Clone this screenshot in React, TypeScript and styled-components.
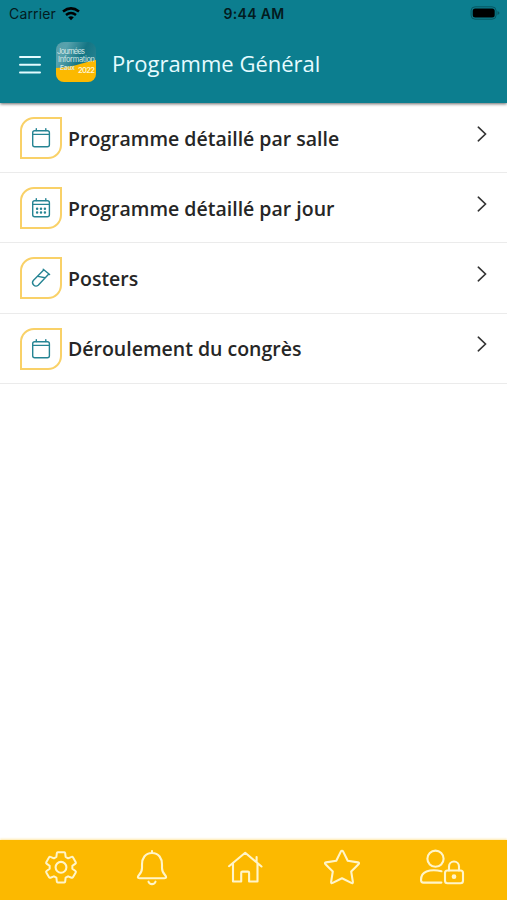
import React from 'react';
import styled, { createGlobalStyle } from 'styled-components';

const GlobalStyle = createGlobalStyle`
  * { box-sizing: border-box; }
  body { margin: 0; background: #fff; font-family: 'Open Sans', sans-serif; }
`;

const Screen = styled.div`
  display: flex;
  flex-direction: column;
  height: 900px;
  width: 100%;
  overflow: hidden;
  background: #fff;
`;

const Header = styled.header`
  flex: none;
  height: 103px;
  background: #0c7e8f;
  box-shadow: 0 1px 3px rgba(0, 0, 0, 0.6);
`;

const StatusBar = styled.div`
  display: grid;
  grid-template-columns: 1fr auto 1fr;
  align-items: center;
  height: 27px;
  padding: 0 7px 0 9px;
  color: #031b20;
  font-family: Inter, sans-serif;
  font-size: 14px;
  line-height: 27px;
`;

const Carrier = styled.div`
  display: flex;
  align-items: center;
  gap: 6px;
  letter-spacing: 0.15px;
`;

const Clock = styled.div`
  margin-left: -1px;
  font-weight: 600;
  letter-spacing: 0.35px;
`;

const Battery = styled.svg`
  justify-self: end;
  margin-bottom: 1px;
`;

const TitleBar = styled.div`
  display: flex;
  align-items: center;
  height: 74px;
  padding-left: 19px;
`;

const MenuIcon = styled.svg`
  margin-top: 2px;
`;

const Logo = styled.svg`
  margin: 0 16px 4px 15px;
`;

const Title = styled.h1`
  margin: 0 0 3px;
  color: #e6fbff;
  font-size: 22px;
  font-weight: 400;
  line-height: 30px;
  white-space: nowrap;
`;

const List = styled.ul`
  flex: 1;
  margin: 0;
  padding: 0;
  list-style: none;
`;

const Row = styled.li`
  display: flex;
  align-items: center;
  height: 70.2px;
  padding: 1px 19px 0 20px;
  border-bottom: 1px solid #ebebeb;
`;

const Leaf = styled.div`
  display: flex;
  width: 42px;
  height: 42px;
  border: 2px solid #f9d168;
  border-radius: 14px 0 14px 0;
  align-items: center;
  justify-content: center;
`;

const Label = styled.span`
  flex: 1;
  margin: 1px 0 0 6px;
  color: #262626;
  font-size: 19.5px;
  font-weight: 600;
  line-height: 28px;
  white-space: nowrap;
`;

const Chevron = styled.svg`
  margin-bottom: 9px;
`;

const Footer = styled.footer`
  flex: none;
  display: flex;
  align-items: flex-start;
  justify-content: space-between;
  height: 60px;
  padding: 8px 42px 0 43px;
  background: #fcb900;
  box-shadow: 0 -1px 2px rgba(252, 185, 0, 0.35);
`;

type IconKind = 'calendar' | 'days' | 'tube';

const RowIcon = ({ kind }: { kind: IconKind }) => (
  <svg width="24" height="24" viewBox="0 0 24 24" fill="none" stroke="#258493" strokeWidth="1.4" strokeLinecap="round" strokeLinejoin="round">
    {kind === 'tube' ? (
      <path d="M14.2 3.2 20.6 8.5M14.9 3.8 4.3 14.4a3.5 3.5 0 0 0 4.9 4.9L19.8 8M9 10.4l7 1.4" />
    ) : (
      <>
        <rect x="3.7" y="4.7" width="16.7" height="16" rx="2" />
        <path d="M3.7 8.4h16.7M7.3 4.5V2.6M16.8 4.5V2.6" />
        {kind === 'days' && (
          <path strokeWidth="2.5" d="M8.1 12.8h.01M12 12.8h.01M15.9 12.8h.01M8.1 16.5h.01M12 16.5h.01M15.9 16.5h.01" />
        )}
      </>
    )}
  </svg>
);

const items: { icon: IconKind; label: string }[] = [
  { icon: 'calendar', label: 'Programme détaillé par salle' },
  { icon: 'days', label: 'Programme détaillé par jour' },
  { icon: 'tube', label: 'Posters' },
  { icon: 'calendar', label: 'Déroulement du congrès' },
];

const NavIcon = styled.svg.attrs({ fill: 'none', stroke: '#fff5c9', strokeWidth: 2.1, strokeLinecap: 'round', strokeLinejoin: 'round' })<{ $shift?: number }>`
  flex: none;
  margin-left: ${({ $shift = 0 }) => $shift}px;
  margin-right: ${({ $shift = 0 }) => -$shift}px;
`;

export default function App() {
  return (
    <Screen>
      <GlobalStyle />
      <Header>
        <StatusBar>
          <Carrier>
            Carrier
            <svg width="18" height="14" viewBox="0 0 18 14" fill="none" stroke="#000" strokeWidth="2.5">
              <path d="M1 4.500Q9-1.800 17 4.500M4 8Q9 4 14 8" />
              <path d="M6.200 10.300Q9 8.100 11.800 10.300L9 13.200Z" fill="#000" stroke="none" />
            </svg>
          </Carrier>
          <Clock>9:44 AM</Clock>
          <Battery width="30" height="14" viewBox="0 0 30 14">
            <rect x="1.100" y="0.800" width="25" height="12.400" rx="4" fill="none" stroke="#075762" />
            <rect x="2.700" y="2.400" width="22" height="9.200" rx="2.500" fill="#000" />
            <path d="M27.500 5v4q2-1 2-2t-2-2" fill="#075762" />
          </Battery>
        </StatusBar>
        <TitleBar>
          <MenuIcon width="22" height="20" viewBox="0 0 22 20" stroke="#e2fbff" strokeWidth="2" strokeLinecap="round">
            <path d="M1 2h20M1 9.800h20M1 17.600h20" />
          </MenuIcon>
          <Logo width="40" height="40" viewBox="0 0 40 40">
            <defs>
              <linearGradient id="sky" x1="0" y1="0" x2="1" y2="0.5">
                <stop offset="0" stopColor="#579da9" />
                <stop offset="0.25" stopColor="#58a2ad" />
                <stop offset="0.65" stopColor="#147584" />
                <stop offset="1" stopColor="#278290" />
              </linearGradient>
              <clipPath id="tile"><rect width="40" height="40" rx="8" /></clipPath>
            </defs>
            <g clipPath="url(#tile)">
              <rect width="40" height="40" fill="url(#sky)" />
              <path d="M0 26Q14 25 24 22T40 18V40H0Z" fill="#fcb900" />
              <g fill="#d3e8e6" fontFamily="Inter, sans-serif" fontSize="7.500">
                <text x="1" y="12" textLength="28">Journées</text>
                <text x="2" y="20" textLength="37">Information</text>
                <text x="4" y="28" fontSize="6.500" fontWeight="600" textLength="15">Eaux</text>
                <text x="22" y="31" fill="#fff4d0" fontWeight="600" textLength="17">2022</text>
              </g>
            </g>
          </Logo>
          <Title>Programme Général</Title>
        </TitleBar>
      </Header>
      <List>
        {items.map(({ icon, label }) => (
          <Row key={label}>
            <Leaf><RowIcon kind={icon} /></Leaf>
            <Label>{label}</Label>
            <Chevron width="12" height="18" viewBox="0 0 12 18" fill="none" stroke="#333" strokeWidth="1.600" strokeLinecap="round">
              <path d="M2.300 2.200l7.200 6.800-7.200 6.800" />
            </Chevron>
          </Row>
        ))}
      </List>
      <Footer>
        <NavIcon width="36" height="38" viewBox="0 0 36 38">
          <path d="M14.500 3.500h7q.8 0 .9.900l.5 4.100 2.600 1.500 3.700-1.500q.9-.4 1.400.4l3 5.200q.5.900-.3 1.500L30 18v3l3.300 2.400q.8.600.3 1.500l-3 5.200q-.5.800-1.400.4l-3.700-1.500-2.600 1.500-.5 4.100q-.1.900-.9.900h-7q-.8 0-.9-.9l-.5-4.100-2.600-1.500-3.700 1.500q-.9.400-1.400-.4l-3-5.200q-.5-.9.300-1.500L6 21v-3l-3.300-2.400q-.8-.6-.3-1.500l3-5.200q.5-.8 1.400-.4l3.700 1.500 2.600-1.500.5-4.100q.1-.9.900-.9z" transform="translate(1 .9) scale(.945)" />
          <circle cx="18" cy="19.300" r="5.400" />
        </NavIcon>
        <NavIcon $shift={-2} width="32" height="38" viewBox="0 0 32 38">
          <path d="M16 3v2M16 5C9 5 6 10.500 6 16.500V20Q6 24 3 27Q.500 30.200 3.500 30.200h25q3 0 .500-3.200-3-3-3-7v-3.500C26 10.500 23 5 16 5M12.500 33.700c1 3.200 6 3.200 7 0" />
        </NavIcon>
        <NavIcon $shift={-1} width="36" height="38" viewBox="0 0 36 38">
          <path d="M2 18.200 18.200 4.800 34.500 18.500M29.600 14V9M6 15.500V33.500h8.200v-8.700q0-1.200 1.200-1.200h5.500q1.200 0 1.200 1.200v8.700h8.400v-18" />
        </NavIcon>
        <NavIcon width="38" height="38" viewBox="0 0 38 38">
          <path d="M19 2.800q.8 0 1.200.8l4.500 9.200 10.200 1.600q2 .4.600 1.900l-7.300 7.300 1.700 10.200q.2 1.900-1.600 1.100L19 30.200l-9.300 4.700q-1.800.8-1.600-1.100l1.700-10.200-7.300-7.300q-1.400-1.500.6-1.900l10.200-1.600 4.500-9.200q.4-.8 1.200-.8z" />
        </NavIcon>
        <NavIcon width="46" height="38" viewBox="0 0 46 38">
          <circle cx="16.500" cy="10.700" r="8.100" />
          <path d="M22.500 23.200q-9-2-15 .3C3.500 25 2 29 2 32q0 2.600 2.400 2.600h18" />
          <rect x="26" y="22.500" width="18" height="12.700" rx="2.500" />
          <path d="M30 22.500v-4a5 5 0 0 1 10 0v4" />
          <circle cx="35" cy="28.700" r="1.300" fill="#fff5c9" />
        </NavIcon>
      </Footer>
    </Screen>
  );
}
